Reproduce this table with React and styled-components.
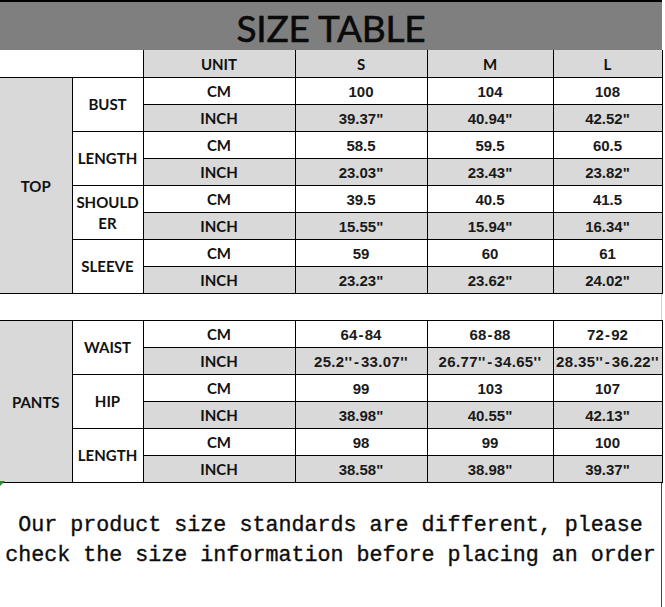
import React from "react";
import styled, { createGlobalStyle } from "styled-components";

const Global = createGlobalStyle`
  html, body { margin: 0; padding: 0; background: #fff; }
  body { width: 665px; height: 607px; overflow: hidden; }
`;

const Sheet = styled.div`
  position: relative;
  width: 665px;
  height: 607px;
  background: #fff;
  display: flex;
  flex-direction: column;
`;

const Title = styled.div`
  width: 662px;
  height: 46px;
  border-top: 2px solid #000;
  background: #7f7f7f;
  display: flex;
  align-items: center;
  justify-content: center;
  font-family: Lato, "Open Sans", sans-serif;
  font-size: 37px;
  font-weight: 400;
  color: #0a0a0a;
  -webkit-text-stroke: 0.6px #0a0a0a;
  letter-spacing: -0.2px;
  padding-top: 2px;
  box-sizing: content-box;
`;

const Table = styled.table`
  width: 662px;
  border-collapse: collapse;
  table-layout: fixed;
  font-family: "Liberation Sans", Arial, sans-serif;
`;

const Row = styled.tr`
  height: 27px;
`;

const Cell = styled.td`
  padding: 0;
  height: 27px;
  box-sizing: border-box;
  text-align: center;
  vertical-align: middle;
  border: 1px solid #000;
  background: ${(p) => (p.$shade ? "#d9d9d9" : "#fff")};
  color: #1a1a1a;
  white-space: nowrap;
  overflow: hidden;
`;

const Label = styled(Cell)`
  font-family: Lato, "Open Sans", sans-serif;
  font-weight: 700;
  font-size: 15px;
  color: #111;
  padding-top: 1px;
`;

const Value = styled(Cell)`
  font-weight: 700;
  font-size: 15px;
  letter-spacing: ${(p) => (p.$wide ? "0.35px" : "0")};
  padding-top: 1px;
`;

const HeaderBlank = styled(Cell)`
  border-left: none;
  border-top: none;
`;

const HeaderLabel = styled(Label)`
  border-top: none;
`;

const Category = styled(Label)`
  background: #d9d9d9;
  border-left: none;
  border-right: ${(p) => (p.$divided ? "1px solid #000" : "none")};
`;

const Measure = styled(Label)`
  white-space: normal;
  line-height: 21px;
`;

const Gap = styled.div`
  width: 661px;
  height: 26px;
  border-right: 1px solid #d0d0d0;
`;

const Notice = styled.div`
  flex: 1;
  width: 661px;
  border-right: 1px solid #444;
  box-sizing: content-box;
  padding-top: 28px;
  font-family: "Liberation Mono", "Courier New", monospace;
  font-size: 21.7px;
  line-height: 30px;
  color: #0d0d0d;
  -webkit-text-stroke: 0.35px #0d0d0d;
  text-align: center;
`;

const Marker = styled.span`
  position: absolute;
  left: 0;
  top: 481px;
  width: 0;
  height: 0;
  border-top: 5px solid #2e8b2e;
  border-right: 5px solid transparent;
`;

const sizes = ["S", "M", "L"];

const top = [
  { name: "BUST", cm: ["100", "104", "108"], inch: ['39.37"', '40.94"', '42.52"'] },
  { name: "LENGTH", cm: ["58.5", "59.5", "60.5"], inch: ['23.03"', '23.43"', '23.82"'] },
  { name: ["SHOULD", "ER"], cm: ["39.5", "40.5", "41.5"], inch: ['15.55"', '15.94"', '16.34"'] },
  { name: "SLEEVE", cm: ["59", "60", "61"], inch: ['23.23"', '23.62"', '24.02"'] },
];

const pants = [
  {
    name: "WAIST",
    cm: ["64\u200a-\u200a84", "68\u200a-\u200a88", "72\u200a-\u200a92"],
    inch: ["25.2''\u200a-\u200a33.07''", "26.77''\u200a-\u200a34.65''", "28.35''\u200a-\u200a36.22''"],
    wide: true,
  },
  { name: "HIP", cm: ["99", "103", "107"], inch: ['38.98"', '40.55"', '42.13"'] },
  { name: "LENGTH", cm: ["98", "99", "100"], inch: ['38.58"', '38.98"', '39.37"'] },
];

function Cols() {
  return (
    <colgroup>
      <col style={{ width: 72 }} />
      <col style={{ width: 71 }} />
      <col style={{ width: 152 }} />
      <col style={{ width: 132 }} />
      <col style={{ width: 126 }} />
      <col style={{ width: 109 }} />
    </colgroup>
  );
}

function Section({ label, items, divided }) {
  const total = items.length * 2;
  return items.map((m, i) => {
    const name = Array.isArray(m.name) ? (
      <>
        {m.name[0]}
        <br />
        {m.name[1]}
      </>
    ) : (
      m.name
    );
    return (
      <React.Fragment key={i}>
        <Row>
          {i === 0 && (
            <Category rowSpan={total} $divided={divided}>
              {label}
            </Category>
          )}
          <Measure rowSpan={2}>{name}</Measure>
          <Label>CM</Label>
          {m.cm.map((v, j) => (
            <Value key={j}>{v}</Value>
          ))}
        </Row>
        <Row>
          <Label $shade>INCH</Label>
          {m.inch.map((v, j) => (
            <Value key={j} $shade $wide={m.wide}>
              {v}
            </Value>
          ))}
        </Row>
      </React.Fragment>
    );
  });
}

export default function App() {
  return (
    <>
      <Global />
      <Sheet>
        <Title>SIZE TABLE</Title>
        <Table>
          <Cols />
          <tbody>
            <Row>
              <HeaderBlank colSpan={2} />
              <HeaderLabel $shade>UNIT</HeaderLabel>
              {sizes.map((s) => (
                <HeaderLabel key={s} $shade>
                  {s}
                </HeaderLabel>
              ))}
            </Row>
            <Section label="TOP" items={top} />
          </tbody>
        </Table>
        <Gap />
        <Table>
          <Cols />
          <tbody>
            <Section label="PANTS" items={pants} divided />
          </tbody>
        </Table>
        <Notice>
          Our product size standards are different, please
          <br />
          check the size information before placing an order
        </Notice>
        <Marker />
      </Sheet>
    </>
  );
}
